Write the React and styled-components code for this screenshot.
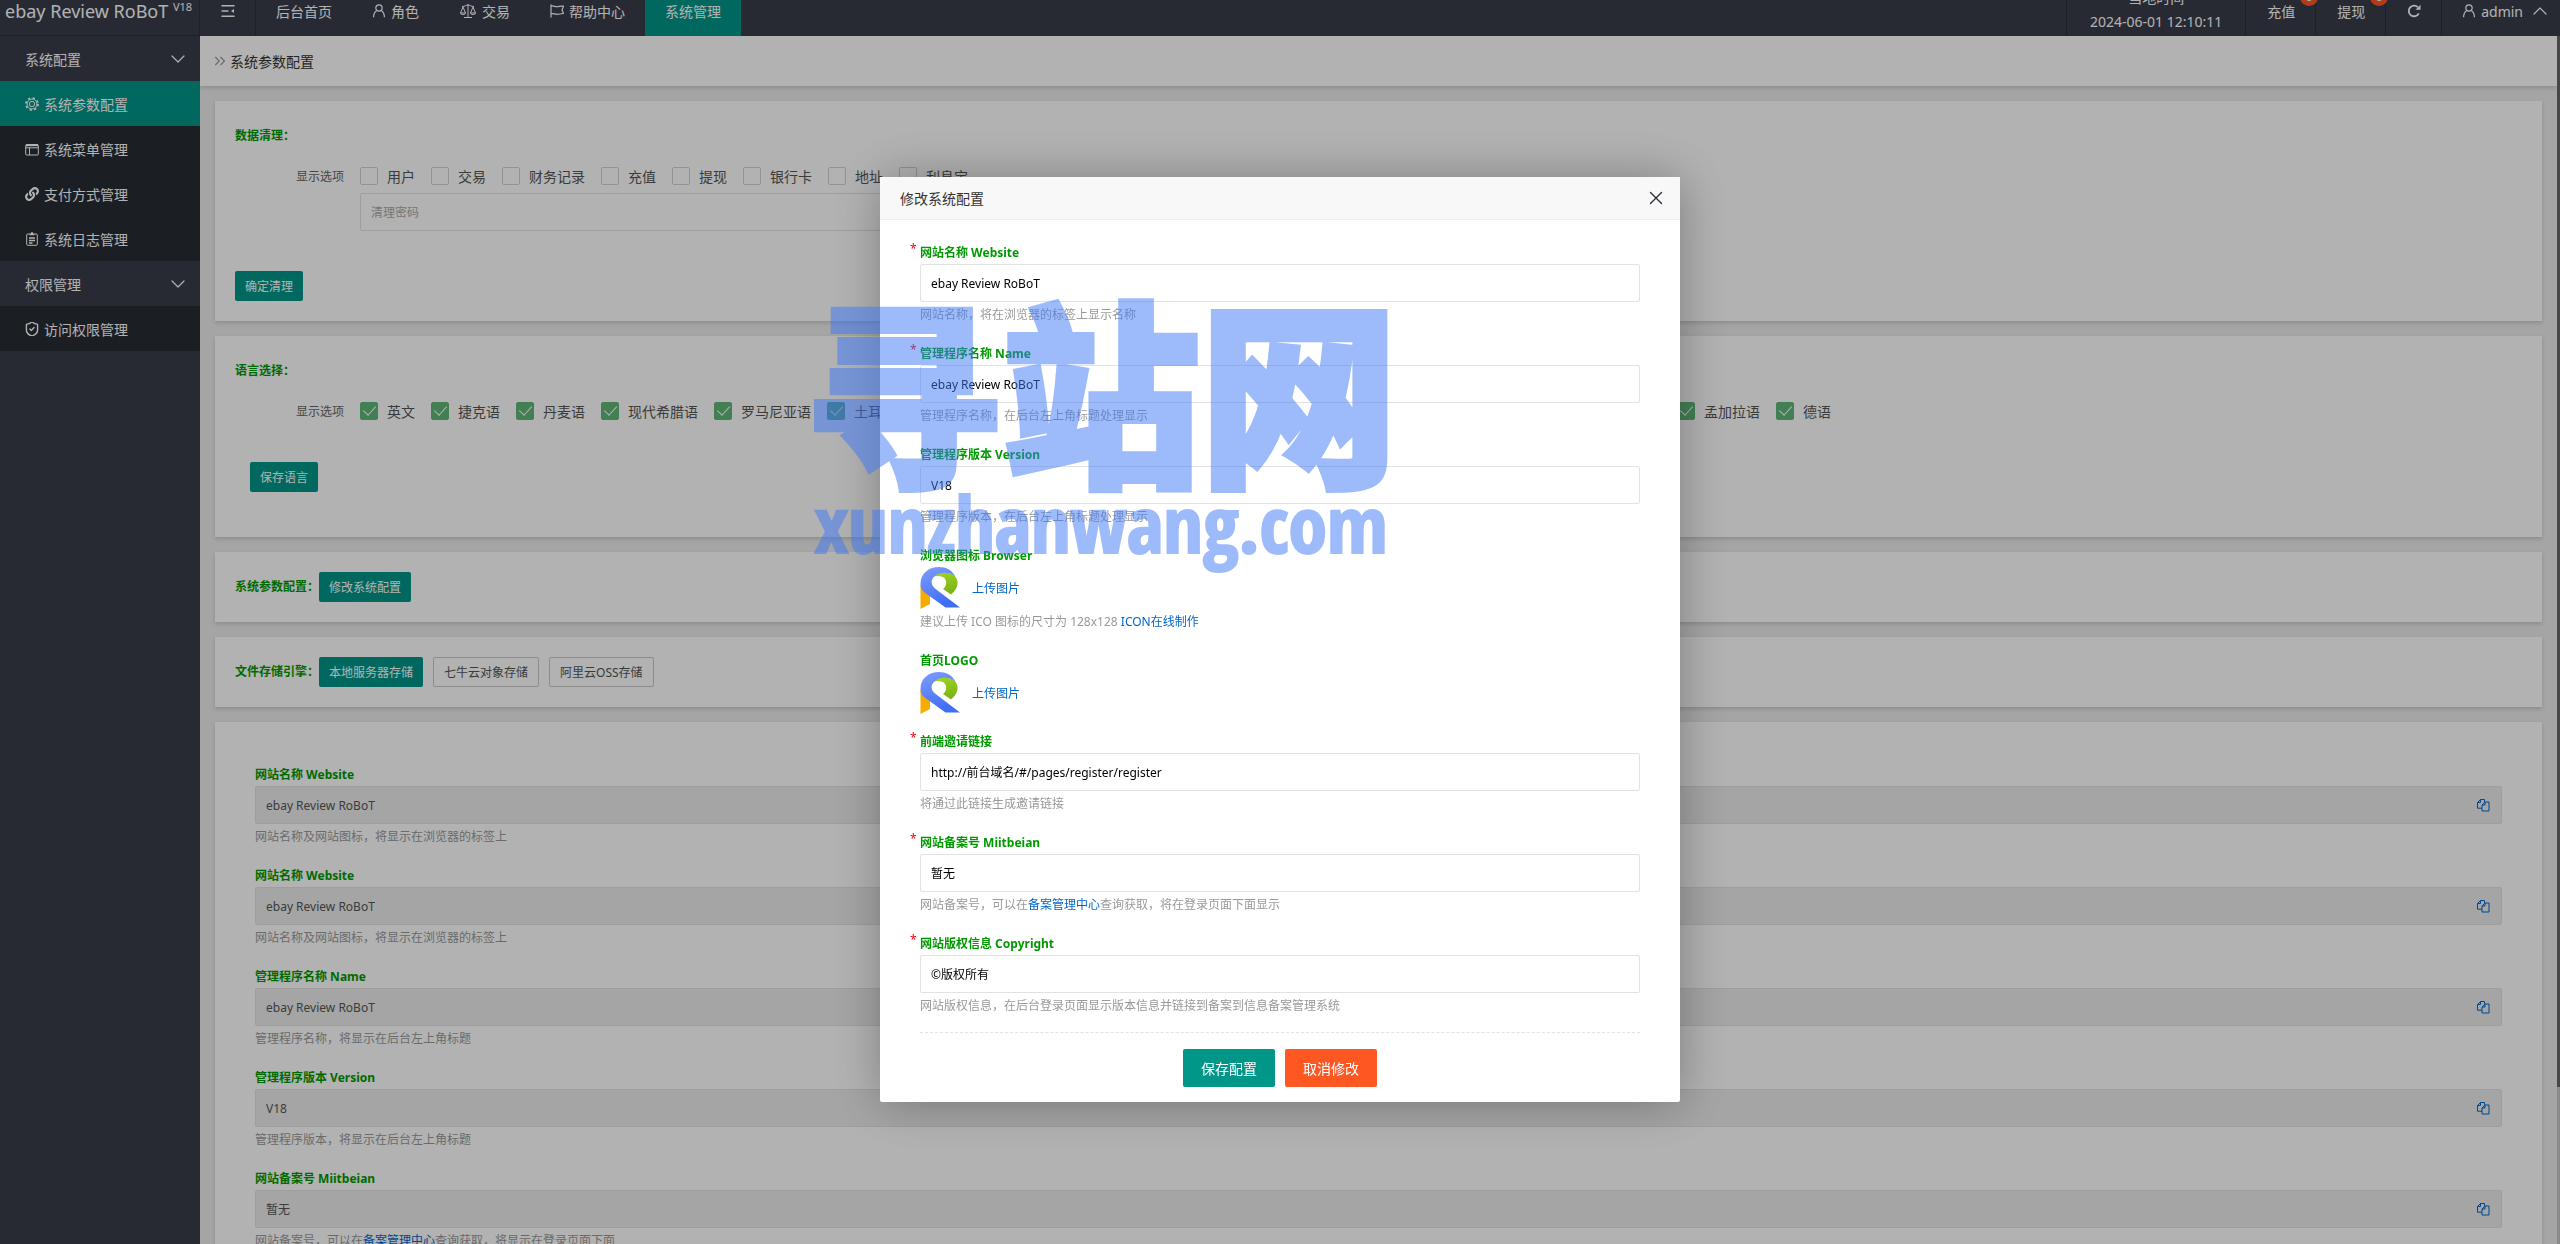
import React from 'react';
import styled, { createGlobalStyle } from 'styled-components';
import { FaLink } from 'react-icons/fa';
import { LuChevronDown, LuChevronUp, LuChevronsRight, LuShieldCheck, LuX } from 'react-icons/lu';

const LANGUAGES = [
    '英文', '捷克语', '丹麦语', '现代希腊语', '罗马尼亚语', '土耳其语', '法语', '西班牙语', '日语',
    '韩语', '葡萄牙语', '俄语', '意大利语', '阿拉伯语', '泰语', '孟加拉语', '德语',
];

const CLEAN_OPTIONS = ['用户', '交易', '财务记录', '充值', '提现', '银行卡', '地址', '利息宝'];

const PARAMS = [
    { label: '网站名称 Website', value: 'ebay Review RoBoT', help: '网站名称及网站图标，将显示在浏览器的标签上' },
    { label: '网站名称 Website', value: 'ebay Review RoBoT', help: '网站名称及网站图标，将显示在浏览器的标签上' },
    { label: '管理程序名称 Name', value: 'ebay Review RoBoT', help: '管理程序名称，将显示在后台左上角标题' },
    { label: '管理程序版本 Version', value: 'V18', help: '管理程序版本，将显示在后台左上角标题' },
    { label: '网站备案号 Miitbeian', value: '暂无', help: <BeianHelp tail="将显示在登录页面下面" /> },
];

function BeianHelp({ tail }) {
    return <>网站备案号，可以在<Link href="#beian">备案管理中心</Link>查询获取，{tail}</>;
}

function UserIcon() {
    return (
        <Svg viewBox="0 0 14 14" width="14" height="14" strokeWidth="1.2">
            <circle cx="7" cy="4" r="3.2" />
            <path d="M4.8 6.6C2.6 8 1.6 10 1.6 13.2M9.2 6.6c2.2 1.4 3.2 3.4 3.2 6.6" />
        </Svg>
    );
}

function ScaleIcon() {
    return (
        <Svg viewBox="0 0 18 16" width="18" height="16">
            <path d="M9 1v13M5 14.5h8M3 3.5c3 0 4-1.5 6-1.5s3 1.5 6 1.5M4 4L1.5 10h5zM14 4l-2.5 6h5zM1.2 10c.6 2 5 2 5.6 0M11.2 10c.6 2 5 2 5.6 0" />
        </Svg>
    );
}

function FlagIcon() {
    return (
        <Svg viewBox="0 0 14 14" width="14" height="14" strokeWidth="1.2">
            <path d="M1 .5V13.5M1 2.2c2.5-1 4 .8 6.5.5 2-.2 3-1 6-.5L12 6l1.5 3.5c-3 0-4 .8-6 .8C5 10.3 3.5 9 1 9.7" />
        </Svg>
    );
}

function ShrinkIcon() {
    return (
        <Svg viewBox="0 0 14 14" width="14" height="14" strokeWidth="1.5">
            <path d="M0.5 1.8h13M0.5 7h7M0.5 12.2h13" />
            <path d="M13 5v4l-3-2z" fill="currentColor" stroke="none" />
        </Svg>
    );
}

function RefreshIcon() {
    return (
        <Svg viewBox="0 0 14 14" width="14" height="14" strokeWidth="1.8">
            <path d="M11.8 9.3A5.3 5.3 0 1 1 10.8 3.2" />
            <path d="M13.5 0.8v5h-5z" fill="currentColor" stroke="none" />
        </Svg>
    );
}

function GearIcon() {
    return (
        <Svg viewBox="0 0 14 14" width="14" height="14">
            <circle cx="7" cy="7" r="2.7" />
            <circle cx="7" cy="7" r="5" />
            <circle cx="7" cy="7" r="6" strokeWidth="1.8" strokeDasharray="2.2 2.51" />
        </Svg>
    );
}

function MenuIcon() {
    return (
        <Svg viewBox="0 0 14 14" width="14" height="14">
            <rect x="0.7" y="2.5" width="12.6" height="10.5" rx="1" />
            <path d="M0.7 5.8h12.6M4.5 5.8V13" />
            <path d="M1 3.2h12" strokeWidth="2" />
        </Svg>
    );
}

function LogIcon() {
    return (
        <Svg viewBox="0 0 14 14" width="14" height="14">
            <rect x="1.7" y="2" width="10.6" height="11.3" rx="1" />
            <path d="M4.5 2.5h5M6 1h2M4 6h6M4 8.5h6M4 11h3.5" strokeWidth="1.3" />
        </Svg>
    );
}

function CopyIcon() {
    return (
        <Svg viewBox="0 0 14 14" width="14" height="14">
            <path d="M6 10.2H1.5V4.5l3-3h4v2.3M4.5 1.5v3h-3" />
            <path d="M6 7l3-3h4v9H6zM9 4v3H6" />
        </Svg>
    );
}

function BrandMark({ id }) {
    return (
        <svg viewBox="0 0 40 42" width="40" height="42" aria-hidden="true">
            <defs>
                <linearGradient id={`${id}Blue`} x1="0" y1="0" x2="0.4" y2="1">
                    <stop offset="0" stopColor="#7f9efb" />
                    <stop offset="1" stopColor="#3f6ef5" />
                </linearGradient>
                <linearGradient id={`${id}Green`} x1="0" y1="0" x2="0.3" y2="1">
                    <stop offset="0" stopColor="#a2d822" />
                    <stop offset="1" stopColor="#7db317" />
                </linearGradient>
            </defs>
            <path d="M0.5 18L10 26V37L0.5 42z" fill="#f6ab00" />
            <path d="M10 11C14 5 24 4 34 8C40 14 38 22 31 27.5L23 22C27 19 27.5 13 23 10C18 8 13 9 10 11z" fill={`url(#${id}Green)`} />
            <path d="M0.5 17C0.5 6 9 0 19 0C26 0 32 3 35 9C29 5 20 4.5 15 9C10 13 11 18 15 21.5L40 40.5H25.5L6 26.5C2 23.5 0.5 21 0.5 17z" fill={`url(#${id}Blue)`} />
        </svg>
    );
}

function CheckItem({ label, checked }) {
    return (
        <CheckLabel>
            <Check type="checkbox" defaultChecked={checked} />
            {label}
        </CheckLabel>
    );
}

function Field({ id, label, value, help, required }) {
    return (
        <div>
            <FieldLabel htmlFor={id}>
                {required && <Star>*</Star>}
                {label}
            </FieldLabel>
            <TextInput id={id} defaultValue={value} />
            <Help>{help}</Help>
        </div>
    );
}

function UploadField({ id, label, help }) {
    return (
        <div>
            <FieldLabel as="div">{label}</FieldLabel>
            <Upload>
                <BrandMark id={id} />
                <Link href="#upload">上传图片</Link>
            </Upload>
            {help && <Help>{help}</Help>}
        </div>
    );
}

function ConfigModal() {
    return (
        <Shade>
            <Modal role="dialog" aria-label="修改系统配置">
                <ModalHead>
                    修改系统配置
                    <CloseButton aria-label="关闭"><LuX size={22} strokeWidth={1.5} /></CloseButton>
                </ModalHead>
                <Form onSubmit={e => e.preventDefault()}>
                    <Fields>
                        <Field id="site" required label="网站名称 Website" value="ebay Review RoBoT" help="网站名称，将在浏览器的标签上显示名称" />
                        <Field id="app" required label="管理程序名称 Name" value="ebay Review RoBoT" help="管理程序名称，在后台左上角标题处理显示" />
                        <Field id="version" label="管理程序版本 Version" value="V18" help="管理程序版本，在后台左上角标题处理显示" />
                        <UploadField
                            id="icon"
                            label="浏览器图标 Browser"
                            help={<>建议上传 ICO 图标的尺寸为 128x128 <Link href="#icon">ICON在线制作</Link></>}
                        />
                        <UploadField id="logo" label="首页LOGO" />
                        <Field id="invite" required label="前端邀请链接" value="http://前台域名/#/pages/register/register" help="将通过此链接生成邀请链接" />
                        <Field id="beian" required label="网站备案号 Miitbeian" value="暂无" help={<BeianHelp tail="将在登录页面下面显示" />} />
                        <Field id="copyright" required label="网站版权信息 Copyright" value="©版权所有" help="网站版权信息，在后台登录页面显示版本信息并链接到备案到信息备案管理系统" />
                    </Fields>
                    <Actions>
                        <BigButton>保存配置</BigButton>
                        <BigButton type="button" $danger>取消修改</BigButton>
                    </Actions>
                </Form>
                <Watermark>
                    <MarkTitle>寻站网</MarkTitle>
                    <MarkUrl>xunzhanwang.com</MarkUrl>
                </Watermark>
            </Modal>
        </Shade>
    );
}

export default function App() {
    return (
        <Page>
            <GlobalStyle />
            <Header>
                <HeaderRow>
                    <Brand>ebay Review RoBoT <sup>V18</sup></Brand>
                    <ToolItem href="#menu" aria-label="菜单"><ShrinkIcon /></ToolItem>
                    <Nav>
                        <NavItem href="#home">后台首页</NavItem>
                        <NavItem href="#role"><UserIcon />角色</NavItem>
                        <NavItem href="#trade"><ScaleIcon />交易</NavItem>
                        <NavItem href="#help"><FlagIcon />帮助中心</NavItem>
                        <NavItem href="#system" $active>系统管理</NavItem>
                    </Nav>
                    <Clock>
                        <span>当地时间</span>
                        <span>2024-06-01 12:10:11</span>
                    </Clock>
                    <ToolItem href="#recharge">充值<Badge>0</Badge></ToolItem>
                    <ToolItem href="#withdraw">提现<Badge>0</Badge></ToolItem>
                    <ToolItem href="#refresh" aria-label="刷新"><RefreshIcon /></ToolItem>
                    <AdminItem href="#admin"><UserIcon />admin<LuChevronUp size={24} strokeWidth={1.2} /></AdminItem>
                </HeaderRow>
            </Header>
            <Body>
                <Sidebar>
                    <Group>系统配置<LuChevronDown size={24} strokeWidth={1.2} /></Group>
                    <SideLink href="#params" $active><GearIcon />系统参数配置</SideLink>
                    <SideLink href="#menus"><MenuIcon />系统菜单管理</SideLink>
                    <SideLink href="#pay"><FaLink size={14} />支付方式管理</SideLink>
                    <SideLink href="#logs"><LogIcon />系统日志管理</SideLink>
                    <Group>权限管理<LuChevronDown size={24} strokeWidth={1.2} /></Group>
                    <SideLink href="#auth"><LuShieldCheck viewBox="3 2 18 20" width="14" height="15" />访问权限管理</SideLink>
                </Sidebar>
                <Main>
                    <Crumb><LuChevronsRight size={18} strokeWidth={1.5} />系统参数配置</Crumb>
                    <Cards>
                        <Card>
                            <Title>数据清理：</Title>
                            <OptionRow>
                                <OptionName>显示选项</OptionName>
                                {CLEAN_OPTIONS.map(name => <CheckItem key={name} label={name} />)}
                            </OptionRow>
                            <PasswordInput type="password" placeholder="清理密码" aria-label="清理密码" />
                            <Button>确定清理</Button>
                        </Card>
                        <LanguageCard>
                            <Title>语言选择：</Title>
                            <OptionRow>
                                <OptionName>显示选项</OptionName>
                                {LANGUAGES.map(name => <CheckItem key={name} label={name} checked />)}
                            </OptionRow>
                            <Button>保存语言</Button>
                        </LanguageCard>
                        <Card>
                            <Inline>
                                <Title>系统参数配置：</Title>
                                <Button>修改系统配置</Button>
                            </Inline>
                        </Card>
                        <Card>
                            <Inline>
                                <Title>文件存储引擎：</Title>
                                <Button>本地服务器存储</Button>
                                <Button $plain>七牛云对象存储</Button>
                                <Button $plain>阿里云OSS存储</Button>
                            </Inline>
                        </Card>
                        <ParamCard>
                            <Fields>
                                {PARAMS.map((item, i) => (
                                    <div key={i}>
                                        <FieldLabel htmlFor={`param-${i}`}>{item.label}</FieldLabel>
                                        <ReadOnly>
                                            <input id={`param-${i}`} readOnly defaultValue={item.value} />
                                            <CopyButton aria-label="复制"><CopyIcon /></CopyButton>
                                        </ReadOnly>
                                        <Help>{item.help}</Help>
                                    </div>
                                ))}
                            </Fields>
                        </ParamCard>
                    </Cards>
                </Main>
                <ScrollTrack><ScrollThumb /></ScrollTrack>
            </Body>
            <ConfigModal />
        </Page>
    );
}

const GlobalStyle = createGlobalStyle`
    * { box-sizing: border-box; }
    body {
        margin: 0;
        color: #333;
        font-family: "Noto Sans", "Noto Sans CJK SC", sans-serif;
        font-size: 14px;
    }
    button, input { font: inherit; }
    a { text-decoration: none; }
`

const Svg = styled.svg.attrs({ 'aria-hidden': true })`
    fill: none;
    stroke: currentColor;
    flex: none;
`

const Page = styled.div`
    display: flex;
    flex-direction: column;
    height: 100vh;
    overflow: hidden;
`

const Header = styled.header`
    display: flex;
    align-items: flex-end;
    height: 36px;
    flex: none;
    overflow: hidden;
    background: #393d49;
    color: #fff;
`

const HeaderRow = styled.div`
    display: flex;
    width: 100%;
    height: 50px;
    flex: none;
`

const Brand = styled.div`
    width: 200px;
    flex: none;
    padding-left: 5px;
    font-size: 18px;
    line-height: 50px;
    white-space: nowrap;
    border-right: 1px solid #2c2f38;
    border-bottom: 1px solid #2c2f38;

    sup {
        font-size: 11px;
        line-height: 11px;
        vertical-align: super;
    }
`

const Nav = styled.nav`
    display: flex;
    flex: 1;
`

const NavItem = styled.a`
    display: flex;
    align-items: center;
    gap: 5px;
    padding: 0 20px;
    color: #fff;
    white-space: nowrap;
    background: ${({ $active }) => ($active ? '#009688' : 'transparent')};
`

const ToolItem = styled(NavItem)`
    position: relative;
    padding-left: 21px;
    border-right: 1px solid #2c2f38;
`

const AdminItem = styled(NavItem)`
    padding-right: 8px;
`

const Badge = styled.span`
    position: absolute;
    top: 2px;
    right: -3px;
    width: 18px;
    height: 18px;
    border-radius: 9px;
    background: #ff5722;
    font-size: 12px;
    line-height: 18px;
    text-align: center;
`

const Clock = styled.div`
    display: flex;
    flex-direction: column;
    align-items: center;
    width: 180px;
    line-height: 24px;
    border-left: 1px solid #2c2f38;
    border-right: 1px solid #2c2f38;
`

const Body = styled.div`
    display: flex;
    flex: 1;
    min-height: 0;
`

const Sidebar = styled.aside`
    width: 200px;
    flex: none;
    background: #393d49;
`

const Group = styled.div`
    display: flex;
    align-items: center;
    justify-content: space-between;
    height: 45px;
    padding: 0 10px 0 25px;
    color: #fff;
`

const SideLink = styled.a`
    display: flex;
    align-items: center;
    gap: 5px;
    height: 45px;
    padding-left: 25px;
    color: #fff;
    background: ${({ $active }) => ($active ? '#009688' : '#282b33')};
`

const Main = styled.main`
    flex: 1;
    min-width: 0;
    overflow: hidden;
    background: #ececec;
`

const Crumb = styled.div`
    display: flex;
    align-items: center;
    gap: 1px;
    height: 50px;
    padding-left: 11px;
    background: #fff;
    box-shadow: 0 2px 4px rgba(0, 0, 0, .15);

    svg { color: #999; }
`

const Cards = styled.div`
    display: flex;
    flex-direction: column;
    gap: 15px;
    padding: 15px;
`

const Card = styled.section`
    padding: 20px;
    background: #fff;
    box-shadow: 0 2px 4px rgba(0, 0, 0, .15);
`

const Button = styled.button`
    height: 30px;
    padding: 0 10px;
    border: ${({ $plain }) => ($plain ? '1px solid #c9c9c9' : '0')};
    border-radius: 2px;
    background: ${({ $plain }) => ($plain ? '#fff' : '#009688')};
    color: ${({ $plain }) => ($plain ? '#555' : '#fff')};
    font-size: 12px;
    white-space: nowrap;
`

const LanguageCard = styled(Card)`
    padding-bottom: 45px;

    ${Button} { margin: 34px 0 0 15px; }
`

const ParamCard = styled(Card)`
    padding: 42px 40px;
`

const Title = styled.div`
    color: #090;
    font-size: 12px;
    font-weight: 700;
    line-height: 30px;
`

const OptionRow = styled.div`
    display: flex;
    align-items: center;
    gap: 16px;
    height: 34px;
    margin-top: 8px;
`

const OptionName = styled.span`
    width: 109px;
    flex: none;
    color: #666;
    font-size: 12px;
    text-align: right;
`

const CheckLabel = styled.label`
    display: flex;
    align-items: center;
    gap: 9px;
    color: #555;
    white-space: nowrap;
`

const Check = styled.input`
    appearance: none;
    display: flex;
    justify-content: center;
    width: 18px;
    height: 18px;
    margin: 0;
    border: 1px solid #d2d2d2;
    border-radius: 2px;

    &:checked {
        border-color: #5fb878;
        background: #5fb878;
    }

    &:checked::after {
        content: '';
        width: 6px;
        height: 11px;
        border: solid #fff;
        border-width: 0 1px 1px 0;
        transform: rotate(42deg);
    }
`

const TextInput = styled.input`
    display: block;
    width: 100%;
    height: 38px;
    padding: 0 10px;
    border: 1px solid #e2e2e2;
    border-radius: 2px;
    background: #fff;
    color: #000;
    font-size: 12px;
    outline: none;
`

const PasswordInput = styled(TextInput)`
    width: 600px;
    margin: 0 0 40px 125px;

    &::placeholder { color: #aaa; }
`

const Inline = styled.div`
    display: flex;
    align-items: center;
    gap: 10px;

    ${Title} + ${Button} { margin-left: -10px; }
`

const Fields = styled.div`
    display: flex;
    flex-direction: column;
    gap: 15px;
`

const FieldLabel = styled.label`
    display: block;
    position: relative;
    color: #090;
    font-size: 12px;
    font-weight: 700;
    line-height: 22px;
`

const Star = styled.span`
    position: absolute;
    top: -4px;
    left: -10px;
    color: red;
    font-weight: 400;
`

const Help = styled.div`
    color: #999;
    font-size: 12px;
    line-height: 26px;
`

const Link = styled.a`
    color: #06c;
    font-size: 12px;
`

const ReadOnly = styled.div`
    display: flex;
    height: 38px;
    border: 1px solid #e2e2e2;
    border-radius: 2px;
    background: #ececec;

    input {
        flex: 1;
        padding: 0 10px;
        border: 0;
        background: none;
        color: #555;
        font-size: 12px;
        outline: none;
    }
`

const CopyButton = styled.button`
    display: flex;
    align-items: center;
    justify-content: center;
    width: 36px;
    padding: 0;
    border: 0;
    background: none;
    color: #06c;
`

const ScrollTrack = styled.div`
    width: 3px;
    flex: none;
    background: #c8c8c8;
`

const ScrollThumb = styled.div`
    height: 87%;
    background: #666;
`

const Shade = styled.div`
    position: fixed;
    inset: 0;
    display: flex;
    justify-content: center;
    align-items: flex-start;
    padding-top: 177px;
    background: rgba(0, 0, 0, .3);
`

const Modal = styled.div`
    position: relative;
    width: 800px;
    background: #fff;
    border-radius: 2px;
    box-shadow: 1px 1px 50px rgba(0, 0, 0, .3);
`

const ModalHead = styled.div`
    display: flex;
    align-items: center;
    justify-content: space-between;
    height: 43px;
    padding: 0 13px 0 20px;
    border-bottom: 1px solid #eee;
    background: #f8f8f8;
`

const CloseButton = styled.button`
    display: flex;
    padding: 0;
    border: 0;
    background: none;
    color: #2e2d3c;
`

const Form = styled.form`
    padding: 22px 40px 15px;
`

const Upload = styled.div`
    display: flex;
    align-items: center;
    gap: 12px;
    height: 42px;

    &:last-child { margin-bottom: 2px; }
`

const Actions = styled.div`
    display: flex;
    justify-content: center;
    gap: 10px;
    margin-top: 13px;
    padding-top: 16px;
    border-top: 1px dashed #e2e2e2;
`

const BigButton = styled.button`
    height: 38px;
    padding: 0 18px;
    border: 0;
    border-radius: 2px;
    background: ${({ $danger }) => ($danger ? '#ff5722' : '#009688')};
    color: #fff;
`

const Watermark = styled.div`
    position: absolute;
    top: 112px;
    left: -76px;
    display: flex;
    flex-direction: column;
    align-items: center;
    color: #3d77f5;
    opacity: .5;
    white-space: nowrap;
    pointer-events: none;
`

const MarkTitle = styled.span`
    font-family: "Noto Sans CJK SC", sans-serif;
    font-size: 198px;
    font-weight: 900;
    line-height: 192px;
    -webkit-text-stroke: 6px #3d77f5;
`

const MarkUrl = styled.span`
    font-family: "Open Sans Condensed", "Roboto Condensed", "Noto Sans Condensed", "Noto Sans CJK SC", sans-serif;
    font-size: 78px;
    font-weight: 700;
    line-height: 84px;
    -webkit-text-stroke: 2px #3d77f5;
`
